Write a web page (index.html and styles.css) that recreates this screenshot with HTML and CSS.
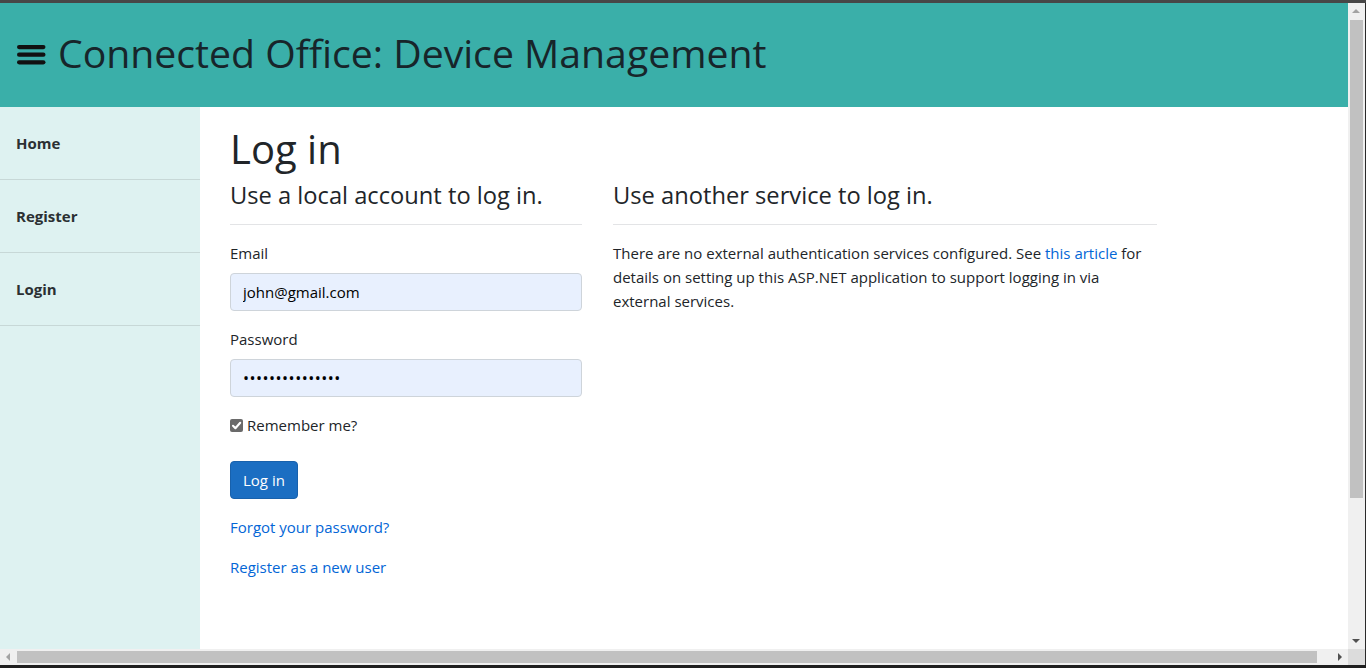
FILE: index.html
```html
<!DOCTYPE html>
<html lang="en">
<head>
<meta charset="utf-8">
<title>Log in - Connected Office</title>
<link rel="stylesheet" href="styles.css">
</head>
<body>
<div class="window">
  <div class="topline"></div>
  <div class="viewport">
    <header class="appbar">
      <svg class="burger" width="29" height="21" viewBox="0 0 29 21" aria-hidden="true">
        <rect x="0" y="0" width="28.5" height="4.2" rx="2.1" fill="#111"/>
        <rect x="0" y="7.6" width="28.5" height="4.2" rx="2.1" fill="#111"/>
        <rect x="0" y="15.2" width="28.5" height="4.2" rx="2.1" fill="#111"/>
      </svg>
      <span class="brand">Connected Office: Device Management</span>
    </header>
    <div class="layout">
      <nav class="sidebar">
        <a class="nav-item" href="#">Home</a>
        <a class="nav-item" href="#">Register</a>
        <a class="nav-item" href="#">Login</a>
      </nav>
      <main class="content">
        <h1 class="page-title">Log in</h1>
        <div class="row">
          <section class="col-local">
            <h4 class="sub">Use a local account to log in.</h4>
            <hr class="rule">
            <div class="form-group">
              <label class="lbl" for="email">Email</label>
              <input class="form-control" id="email" type="text" value="john@gmail.com">
            </div>
            <div class="form-group">
              <label class="lbl" for="pwd">Password</label>
              <input class="form-control pwd" id="pwd" type="password" value="123456789012345">
            </div>
            <div class="form-group check-row">
              <span class="fake-check"><svg width="13" height="13" viewBox="0 0 13 13"><path d="M3 6.8 L5.4 9.2 L10.2 3.8" fill="none" stroke="#fff" stroke-width="2.1" stroke-linecap="round" stroke-linejoin="round"/></svg></span>
              <span class="check-label">Remember me?</span>
            </div>
            <div class="form-group">
              <button class="btn" type="button">Log in</button>
            </div>
            <p class="link-line"><a href="#">Forgot your password?</a></p>
            <p class="link-line"><a href="#">Register as a new user</a></p>
          </section>
          <section class="col-ext">
            <h4 class="sub">Use another service to log in.</h4>
            <hr class="rule">
            <p class="ext-text">There are no external authentication services configured. See <a href="#">this article</a> for details on setting up this ASP.NET application to support logging in via external services.</p>
          </section>
        </div>
      </main>
    </div>
  </div>
  <div class="vscroll">
    <span class="arrow up"></span>
    <div class="vthumb"></div>
    <span class="arrow down"></span>
  </div>
  <div class="rightline"></div>
  <div class="hscroll">
    <span class="arrow left"></span>
    <div class="hthumb"></div>
    <span class="arrow right"></span>
  </div>
  <div class="corner"></div>
  <div class="rightline2"></div>
  <div class="bottomline"></div>
</div>
</body>
</html>
```
FILE: styles.css
```css
* { box-sizing: border-box; }
html, body { margin: 0; padding: 0; }
body {
  width: 1366px;
  height: 668px;
  overflow: hidden;
  font-family: "Open Sans", "Noto Sans", sans-serif;
  font-size: 15px;
  color: #212529;
  background: #fff;
}
.window {
  display: grid;
  grid-template-columns: 1348px 17px 1px;
  grid-template-rows: 3px 646px 16px 3px;
  width: 1366px;
  height: 668px;
}
.topline { grid-column: 1 / 4; background: #474747; }
.viewport {
  grid-column: 1; grid-row: 2;
  display: flex;
  flex-direction: column;
  overflow: hidden;
  background: #fff;
}
.appbar {
  height: 104px;
  flex: none;
  background: #3aafa9;
  display: flex;
  align-items: center;
  padding-left: 17px;
  gap: 12px;
}
.burger { display: block; margin-top: 1px; }
.brand {
  font-size: 39.2px;
  font-weight: 500;
  color: #17252a;
  line-height: 48px;
  padding-bottom: 5px;
  white-space: nowrap;
}
.layout { flex: 1; display: flex; }
.sidebar {
  width: 200px;
  flex: none;
  background: #def2f1;
  display: flex;
  flex-direction: column;
}
.nav-item {
  display: block;
  padding: 24px 16px;
  line-height: 24px;
  font-size: 15px;
  font-weight: 700;
  color: #2b3033;
  text-decoration: none;
  border-bottom: 1px solid #c7d8d7;
}
.content { flex: 1; padding: 18px 30px 0 30px; }
.page-title {
  margin: 0 0 8px 0;
  font-size: 40px;
  font-weight: 500;
  line-height: 48px;
}
.row { display: flex; gap: 31px; }
.col-local { width: 352px; flex: none; }
.col-ext { width: 544px; flex: none; }
.sub {
  margin: 0;
  font-size: 23.7px;
  font-weight: 500;
  line-height: 29px;
}
.rule {
  margin: 14px 0 16px 0;
  border: 0;
  border-top: 1px solid #e3e4e6;
}
.form-group { margin-bottom: 16px; }
.lbl {
  display: block;
  font-size: 15px;
  line-height: 24px;
  margin-bottom: 8px;
}
.form-control {
  display: block;
  width: 100%;
  height: 38px;
  padding: 6px 12px;
  font-family: inherit;
  font-size: 15px;
  line-height: 24px;
  color: #000;
  background: #e8f0fe;
  border: 1px solid #ced4da;
  border-radius: 4px;
  outline: none;
}
.pwd { font-size: 16px; letter-spacing: 0.5px; }
.check-row { display: flex; align-items: center; height: 24px; gap: 4px; margin-bottom: 24px; }
.fake-check {
  width: 13px;
  height: 13px;
  background: #6a6a6a;
  border-radius: 2px;
  display: block;
}
.fake-check svg { display: block; }
.check-label { font-size: 15px; line-height: 24px; }
.btn {
  display: inline-block;
  height: 38px;
  padding: 6px 12px;
  font-family: inherit;
  font-size: 15px;
  line-height: 24px;
  color: #fff;
  background: #1b6ec2;
  border: 1px solid #1861ac;
  border-radius: 4px;
}
.link-line { margin: 0 0 16px 0; font-size: 15px; line-height: 24px; }
a { color: #0366d6; text-decoration: none; }
.ext-text { margin: 0; font-size: 15px; line-height: 24px; }

.vscroll {
  grid-column: 2; grid-row: 2;
  background: #f0f0f0;
  position: relative;
}
.vthumb {
  position: absolute;
  left: 2px; top: 17px;
  width: 13px; height: 478px;
  background: #c1c1c1;
}
.rightline { grid-column: 3; grid-row: 2; background: #2a2a2a; }
.hscroll {
  grid-column: 1; grid-row: 3;
  background: #f0f0f0;
  position: relative;
}
.hthumb {
  position: absolute;
  left: 17px; top: 2px;
  width: 1300px; height: 12px;
  background: #c1c1c1;
}
.corner { grid-column: 2; grid-row: 3; background: #dcdcdc; }
.rightline2 { grid-column: 3; grid-row: 3; background: #2a2a2a; }
.bottomline { grid-column: 1 / 4; grid-row: 4; background: #1f1f1f; }
.arrow { position: absolute; width: 0; height: 0; }
.arrow.up {
  left: 4px; top: 6px;
  border-left: 4px solid transparent;
  border-right: 4px solid transparent;
  border-bottom: 4px solid #a3a3a3;
}
.arrow.down {
  left: 4px; bottom: 6px;
  border-left: 4px solid transparent;
  border-right: 4px solid transparent;
  border-top: 4px solid #505050;
}
.arrow.left {
  left: 6px; top: 4px;
  border-top: 4px solid transparent;
  border-bottom: 4px solid transparent;
  border-right: 4px solid #a3a3a3;
}
.arrow.right {
  right: 6px; top: 4px;
  border-top: 4px solid transparent;
  border-bottom: 4px solid transparent;
  border-left: 4px solid #505050;
}
```
